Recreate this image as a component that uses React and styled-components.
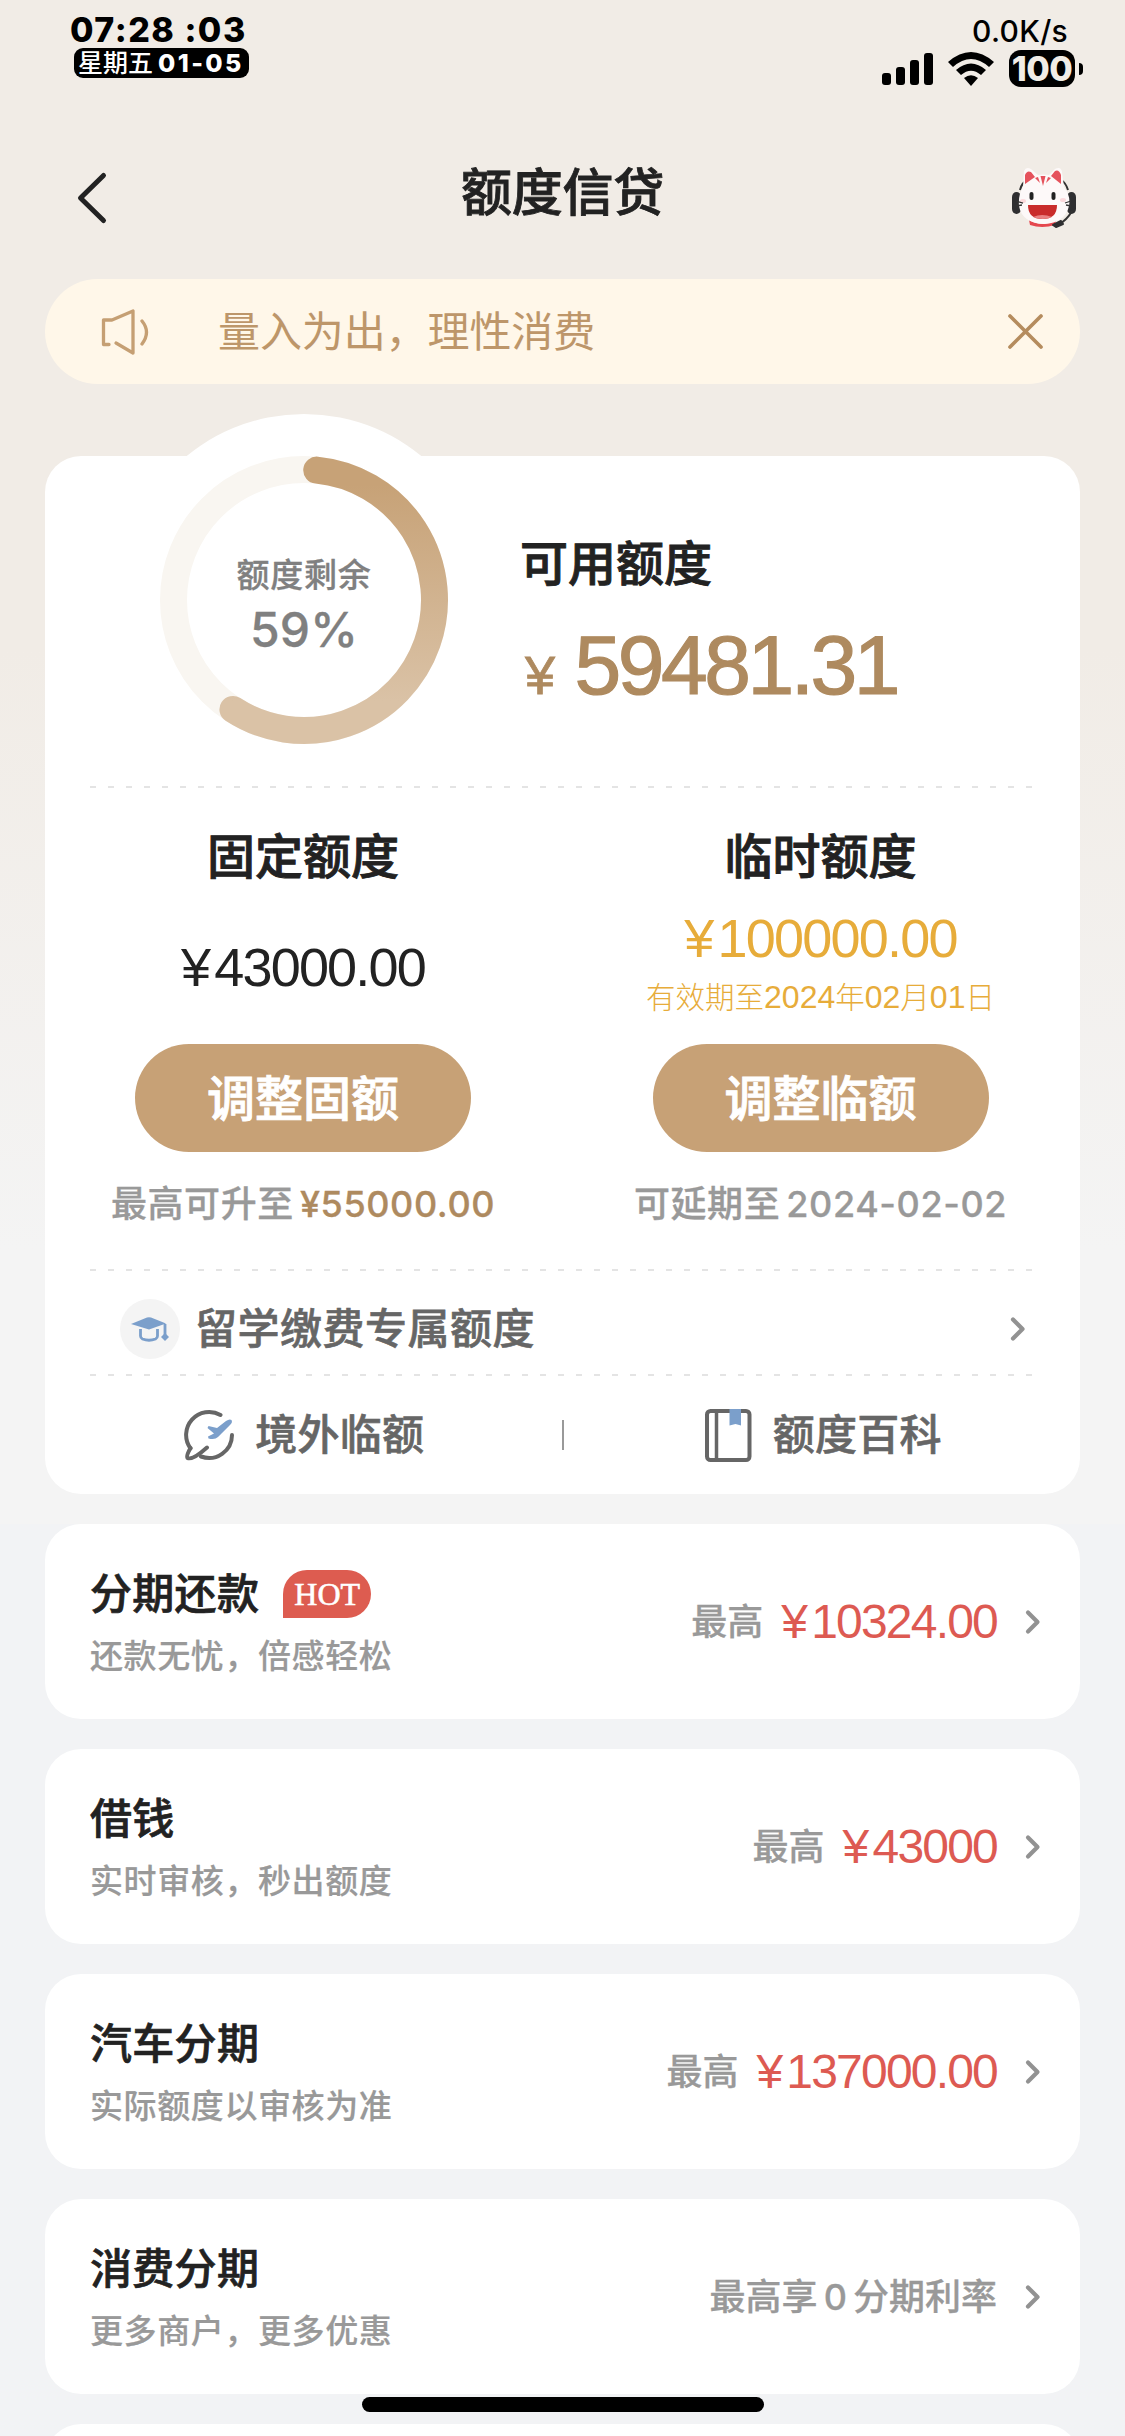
import styled, { createGlobalStyle } from "styled-components"

const GlobalStyle = createGlobalStyle`
    * {
        box-sizing: border-box;
    }
    body {
        margin: 0;
        background: #f2f3f5;
        font-family: Inter, "Noto Sans CJK SC", sans-serif;
        font-weight: 500;
        color: #222;
    }
    svg {
        display: block;
        flex-shrink: 0;
    }
`

const Screen = styled.div`
    position: relative;
    width: 1125px;
    height: 2436px;
    overflow: hidden;
    background: linear-gradient(180deg, #f1ece6 0, #f1ece6 650px, #f4f4f4 1250px, #f4f4f4 1524px, #f2f3f5 1524px);
`

/* ---- status bar ---- */

const StatusBar = styled.header`
    display: flex;
    justify-content: space-between;
    height: 138px;
    padding: 10px 42px 0 70px;
`
const StatusLeft = styled.div`
    display: flex;
    flex-direction: column;
    align-items: flex-start;
`
const Clock = styled.div`
    height: 38px;
    line-height: 39px;
    font-size: 34px;
    font-weight: 800;
    letter-spacing: 1.5px;
    color: #000;
    white-space: pre;
`
const DatePill = styled.div`
    display: flex;
    align-items: center;
    width: 175px;
    height: 30px;
    margin-left: 4px;
    padding-left: 4px;
    border-radius: 9px;
    background: #000;
    color: #fff;
    font-size: 25px;
    line-height: 30px;
    white-space: nowrap;

    b {
        margin-left: 5px;
        font-weight: 800;
        letter-spacing: 2.4px;
    }
`
const StatusRight = styled.div`
    display: flex;
    flex-direction: column;
    align-items: flex-end;
`
const Speed = styled.div`
    height: 40px;
    padding-right: 15px;
    line-height: 42px;
    font-size: 30px;
    letter-spacing: 0.3px;
    color: #000;
`
const StatusIcons = styled.div`
    display: flex;
    align-items: center;
    height: 37px;
`
const Battery = styled.div`
    display: flex;
    align-items: center;
    margin-left: 15px;

    span {
        display: flex;
        align-items: center;
        justify-content: center;
        width: 66px;
        height: 37px;
        border-radius: 12px;
        background: #000;
        color: #f1ece6;
        font-size: 34px;
        font-weight: 800;
        letter-spacing: -0.5px;
    }
    i {
        width: 4px;
        height: 12px;
        margin-left: 4px;
        border-radius: 0 5px 5px 0;
        background: #000;
    }
`

/* ---- title bar and notice ---- */

const NavBar = styled.nav`
    display: grid;
    grid-template-columns: 200px 1fr 200px;
    align-items: center;
    height: 120px;
    padding: 0 48px 0 76px;

    svg:last-child {
        justify-self: end;
    }
`
const Title = styled.h1`
    margin: -10px 0 0 -28px;
    text-align: center;
    font-size: 51px;
    font-weight: 500;
    line-height: 60px;
    letter-spacing: -0.3px;
    -webkit-text-stroke: 0.8px;
`
const Notice = styled.section`
    display: flex;
    align-items: center;
    height: 105px;
    margin: 21px 45px 0;
    padding: 0 36px 0 54px;
    border-radius: 53px;
    background: #fff7e9;
    color: #bd966a;
`
const NoticeText = styled.p`
    flex: 1;
    margin: 0 0 0 67px;
    font-size: 42px;
    font-weight: 400;
    line-height: 60px;
    letter-spacing: -0.1px;
`

/* ---- limit card ---- */

const LimitCard = styled.section`
    height: 1038px;
    margin: 72px 45px 0;
    border-radius: 36px;
    background: #fff;
`
const Summary = styled.div`
    display: flex;
    height: 330px;
    padding-left: 74px;
`
const Dial = styled.div`
    position: relative;
    width: 370px;
    height: 370px;
    margin-top: -42px;
    border-radius: 50%;
    background: #fff;
`
const DialLabel = styled.div`
    position: absolute;
    inset: 0;
    padding-top: 142px;
    text-align: center;
    color: #808080;
    font-size: 33px;
    line-height: 38px;
    letter-spacing: 0.7px;
    -webkit-text-stroke: 0.3px;

    strong {
        display: block;
        margin-top: 5px;
        font-size: 48px;
        font-weight: 500;
        line-height: 62px;
        letter-spacing: 0.2px;
    }
`
const Available = styled.div`
    padding: 78px 0 0 31px;
`
const Heading = styled.h2`
    margin: 0;
    font-size: 48px;
    font-weight: 500;
    line-height: 60px;
    -webkit-text-stroke: 0.9px;
`
const BigAmount = styled.div`
    display: flex;
    align-items: baseline;
    margin: 23px 0 0 5px;
    color: #ae8a5f;
    font: 84px/96px "Liberation Sans", sans-serif;
    letter-spacing: -3.5px;
    -webkit-text-stroke: 1.2px;

    small {
        margin-right: 23px;
        font-size: 54px;
        -webkit-text-stroke-width: 0.8px;
    }
`
const DashedLine = styled.div`
    height: 2px;
    margin: 0 45px;
    background: repeating-linear-gradient(90deg, #e4e4e4 0 6px, transparent 6px 18px);
`
const LimitColumns = styled.div`
    display: grid;
    grid-template-columns: 516px 1fr;
    height: 481px;
`
const LimitColumn = styled.div`
    display: flex;
    flex-direction: column;
    align-items: center;
    padding-top: 39px;
`
const AmountBox = styled.div`
    display: flex;
    flex-direction: column;
    align-items: center;
    justify-content: center;
    height: 137px;
    margin-top: 11px;
    margin-bottom: 9px;
`
const Amount = styled.span`
    color: ${props => props.$color};
    font-family: "Liberation Sans", sans-serif;
    font-size: ${props => props.$size}px;
    font-weight: 400;
    line-height: ${props => props.$size + 4}px;
    letter-spacing: -1.8px;
    white-space: nowrap;

    &::first-letter {
        margin-right: 5px;
    }
`
const ValidUntil = styled.span`
    margin: 10px 0 10px;
    color: #e7ac3a;
    font: 300 29.5px/36px "Noto Sans CJK SC", sans-serif;
    white-space: nowrap;

    i {
        font: 400 32px/36px "Liberation Sans", sans-serif;
    }
`
const PillButton = styled.button`
    width: 336px;
    height: 108px;
    padding: 2px 0 0;
    border: 0;
    border-radius: 54px;
    background: #c7a176;
    color: #fff;
    font: 500 48px/60px Inter, "Noto Sans CJK SC", sans-serif;
    -webkit-text-stroke: 0.9px;
`
const Caption = styled.p`
    display: flex;
    gap: 6px;
    margin: 28px 0 0;
    color: #999;
    font-size: 36px;
    line-height: 48px;
    letter-spacing: 0.6px;
    white-space: nowrap;
    -webkit-text-stroke: 0.3px;

    span {
        color: ${props => props.$accent || "inherit"};
    }
`
const StudyRow = styled.div`
    display: flex;
    align-items: center;
    height: 103px;
    padding: 12px 54px 0 75px;
    color: #666;
    font-size: 42px;
    line-height: 60px;
    letter-spacing: 0.5px;

    span {
        flex: 1;
        margin-left: 15px;
        -webkit-text-stroke: 0.6px;
    }
`
const StudyBadge = styled.div`
    display: flex;
    align-items: center;
    justify-content: center;
    width: 60px;
    height: 60px;
    border-radius: 50%;
    background: #f4f4f4;
`
const Shortcuts = styled.div`
    display: grid;
    grid-template-columns: 1fr 2px 1fr;
    align-items: center;
    height: 117px;
`
const Shortcut = styled.div`
    display: flex;
    align-items: center;
    justify-content: center;
    gap: 21px;
    padding-left: 2px;
    color: #666;
    font-size: 42px;
    line-height: 60px;
    letter-spacing: 0.3px;
    -webkit-text-stroke: 0.6px;
`
const Separator = styled.div`
    height: 30px;
    background: #999;
`

/* ---- product list ---- */

const Product = styled.article`
    display: flex;
    align-items: center;
    height: 195px;
    margin: 30px 45px 0;
    padding: 0 39px 0 45px;
    border-radius: 36px;
    background: #fff;
`
const ProductInfo = styled.div`
    flex: 1;
`
const ProductTitle = styled.h3`
    display: flex;
    align-items: center;
    height: 60px;
    margin: 0;
    padding-bottom: 3px;
    font-size: 42px;
    font-weight: 500;
    line-height: 56px;
    letter-spacing: 0.3px;
    -webkit-text-stroke: 0.7px;
`
const HotBadge = styled.span`
    width: 88px;
    height: 48px;
    margin-left: 24px;
    border-radius: 24px 24px 24px 0;
    background: #dd5c50;
    color: #fff;
    text-align: center;
    font: 32px/48px "Liberation Serif", serif;
    letter-spacing: 0;
    -webkit-text-stroke: 0.6px;
`
const ProductDesc = styled.p`
    margin: 9px 0 0;
    color: #999;
    font-size: 33px;
    line-height: 44px;
    letter-spacing: 0.6px;
    -webkit-text-stroke: 0.2px;
`
const ProductLimit = styled.div`
    display: flex;
    align-items: center;
    gap: 18px;
    margin-right: 28px;
    color: #999;
    font-size: 36px;
    line-height: 48px;
    word-spacing: -3.5px;
    white-space: pre;
`
const LimitText = styled.span`
    -webkit-text-stroke: 0.3px;
`
const HomeIndicator = styled.div`
    position: absolute;
    left: 362px;
    bottom: 24px;
    width: 402px;
    height: 15px;
    border-radius: 8px;
    background: #000;
`

/* ---- icons ---- */

const SignalIcon = () => (
    <svg width="51" height="32" viewBox="0 0 51 32">
        <rect x="0" y="20" width="9" height="12" rx="3" />
        <rect x="14" y="14" width="9" height="18" rx="3" />
        <rect x="28" y="7" width="9" height="25" rx="3" />
        <rect x="42" y="0" width="9" height="32" rx="3" />
    </svg>
)

const WifiSvg = styled.svg`
    margin-left: 15px;
`

const WifiIcon = () => (
    <WifiSvg width="46" height="34" viewBox="0 0 46 34">
        <path d="M0 10Q23 -10 46 10L41 15Q23 -1 5 15Z" />
        <path d="M8 18Q23 5 38 18L33 23Q23 14.500 13 23Z" />
        <path d="M16 26Q23 20.500 30 26L23 34Z" />
    </WifiSvg>
)

const BackIcon = () => (
    <svg width="32" height="54" viewBox="0 0 32 54" fill="none" stroke="#222" strokeWidth="5" strokeLinecap="round" strokeLinejoin="round">
        <path d="M27.500 4.500L4.500 27L27.500 49.500" />
    </svg>
)

const CatIcon = () => (
    <svg width="66" height="62" viewBox="0 0 66 62">
        <path d="M9 23Q11 15 17 13M57 23Q55 16 50 13" fill="none" stroke="#333" strokeWidth="2" />
        <rect x="1" y="25" width="9" height="22" rx="5" fill="#2f2f31" />
        <rect x="56" y="25" width="9" height="22" rx="5" fill="#2f2f31" />
        <path d="M18 53Q31 61 45 53L44 58Q31 62 19 58Z" fill="#e5484f" />
        <path d="M12 20L13 4Q15-1 20 2L27 8Q32 7 38 8L44 2Q50-1 51 5L53 20Q60 29 58 39Q54 56 33 57Q11 56 8 39Q7 28 12 20Z" fill="#fdf9f9" />
        <path d="M14 17V8Q16 3 20 5L24 10ZM50 17V8Q48 2 44 4L40 9Z" fill="#e5525c" />
        <path d="M29.500 9H34.500L32 19ZM24 11L29 16L27 10ZM40 11L35 16L37 10Z" fill="#e5525c" />
        <rect x="18.500" y="25" width="4" height="8" rx="2" fill="#222" />
        <rect x="40.500" y="25" width="4" height="8" rx="2" fill="#222" />
        <ellipse cx="12" cy="34" rx="3" ry="2" fill="#fbd9dc" />
        <ellipse cx="52" cy="33" rx="3" ry="2" fill="#fbd9dc" />
        <path d="M17 38H46Q46 52 31.500 52Q17 52 17 38Z" fill="#c92c2b" />
        <path d="M22 50Q31 46 41 50Q32 54 22 50Z" fill="#e98282" />
        <path d="M5 34L12 36M5 39L11 38M60 34L54 36M60 39L55 38" stroke="#333" strokeWidth="1.300" />
        <path d="M61 44Q56 53 47 58" fill="none" stroke="#333" strokeWidth="2" />
        <path d="M42 58L50 54L52 57L45 60Z" fill="#2f2f31" stroke="#2f2f31" strokeWidth="2" strokeLinejoin="round" />
    </svg>
)

const SpeakerIcon = () => (
    <svg width="52" height="50" viewBox="0 0 52 50" fill="none" stroke="#c59f73" strokeWidth="3.300" strokeLinejoin="round" strokeLinecap="round">
        <path d="M10 37.500H4.500V13H13L34 4V46L17 36" />
        <path d="M43 14Q52 25 43 37" />
    </svg>
)

const CloseIcon = () => (
    <svg width="37" height="37" viewBox="0 0 37 37" stroke="#b58c5e" strokeWidth="3.700" strokeLinecap="round">
        <path d="M3 3L34 34M34 3L3 34" />
    </svg>
)

const ChevronIcon = () => (
    <svg width="16" height="26" viewBox="0 0 16 26" fill="none" stroke="#929292" strokeWidth="4.200" strokeLinecap="round" strokeLinejoin="round">
        <path d="M3 3.500L12.500 13L3 22.500" />
    </svg>
)

const GraduationIcon = () => (
    <svg width="40" height="26" viewBox="0 0 40 26">
        <path d="M1 8L17 1.500Q19 .8 21 1.500L36 7.500L19 13.500Z" fill="#7b9fcb" />
        <path d="M10.500 13V20Q10.500 22 12.500 23Q19 25.500 25.500 23Q27.500 22 27.500 20V13M35 8V19" fill="none" stroke="#7b9fcb" strokeWidth="2.800" />
        <path d="M35 17L39 21L35 25L31 21Z" fill="#7b9fcb" />
    </svg>
)

const PlaneIcon = () => (
    <svg width="50" height="54" viewBox="0 0 50 54" fill="none" strokeLinecap="round">
        <path d="M36.500 7A23 23 0 0 0 6.500 40.500M48 27A23 23 0 0 1 17 48.500" stroke="#666" strokeWidth="4" />
        <path d="M6.500 40Q2 48 3.500 50Q8.500 52.500 23 39.500" stroke="#666" strokeWidth="4" />
        <path d="M24.500 18L33 20L42 13Q45.500 10.500 47.500 12Q49 14.500 45.500 17.500L34 29Q31 32 24.500 30.500L24 28.500L30 25.500L23.500 20Z" fill="#7b9fcb" />
    </svg>
)

const BookIcon = () => (
    <svg width="48" height="54" viewBox="0 0 48 54" fill="none" stroke="#666" strokeWidth="4">
        <rect x="3" y="3" width="42.500" height="49" rx="3.500" />
        <path d="M12.500 3V51" strokeWidth="3.500" />
        <path d="M25.500 1H37V17.500L31.500 16L25.500 17.500Z" fill="#7b9fcb" stroke="none" />
    </svg>
)

// Arc runs clockwise from just past 12 o'clock, angles in degrees from the top
const point = (deg) => {
    const rad = (deg * Math.PI) / 180
    return `${185 + 130.5 * Math.sin(rad)} ${186 - 130.5 * Math.cos(rad)}`
}

const Ring = () => (
    <svg width="370" height="370" viewBox="0 0 370 370" fill="none" strokeWidth="27">
        <defs>
            <linearGradient id="ring" x1="0" y1="42" x2="0" y2="330" gradientUnits="userSpaceOnUse">
                <stop offset="0.1" stopColor="#c7a277" />
                <stop offset="0.85" stopColor="#dac2a6" />
            </linearGradient>
        </defs>
        <circle cx="185" cy="186" r="130.500" stroke="#f9f6f1" />
        <path d={`M${point(5.6)}A130.500 130.500 0 1 1 ${point(213)}`} stroke="url(#ring)" strokeLinecap="round" />
    </svg>
)

const products = [
    { id: 1, title: "分期还款", desc: "还款无忧，倍感轻松", hot: true, amount: "¥10324.00" },
    { id: 2, title: "借钱", desc: "实时审核，秒出额度", amount: "¥43000" },
    { id: 3, title: "汽车分期", desc: "实际额度以审核为准", amount: "¥137000.00" },
    { id: 4, title: "消费分期", desc: "更多商户，更多优惠", text: "最高享 0 分期利率" },
]

function App() {
    return (
        <Screen>
            <GlobalStyle />
            <StatusBar>
                <StatusLeft>
                    <Clock>07:28 :03</Clock>
                    <DatePill>星期五<b>01-05</b></DatePill>
                </StatusLeft>
                <StatusRight>
                    <Speed>0.0K/s</Speed>
                    <StatusIcons>
                        <SignalIcon />
                        <WifiIcon />
                        <Battery><span>100</span><i /></Battery>
                    </StatusIcons>
                </StatusRight>
            </StatusBar>

            <NavBar>
                <BackIcon />
                <Title>额度信贷</Title>
                <CatIcon />
            </NavBar>

            <Notice>
                <SpeakerIcon />
                <NoticeText>量入为出，理性消费</NoticeText>
                <CloseIcon />
            </Notice>

            <LimitCard>
                <Summary>
                    <Dial>
                        <Ring />
                        <DialLabel>额度剩余<strong>59%</strong></DialLabel>
                    </Dial>
                    <Available>
                        <Heading>可用额度</Heading>
                        <BigAmount><small>¥</small>59481.31</BigAmount>
                    </Available>
                </Summary>
                <DashedLine />
                <LimitColumns>
                    <LimitColumn>
                        <Heading>固定额度</Heading>
                        <AmountBox>
                            <Amount $size={54} $color="#222">¥43000.00</Amount>
                        </AmountBox>
                        <PillButton>调整固额</PillButton>
                        <Caption $accent="#ae8a5f">最高可升至<span>¥55000.00</span></Caption>
                    </LimitColumn>
                    <LimitColumn>
                        <Heading>临时额度</Heading>
                        <AmountBox>
                            <Amount $size={54} $color="#e7ac3a">¥100000.00</Amount>
                            <ValidUntil>有效期至<i>2024</i>年<i>02</i>月<i>01</i>日</ValidUntil>
                        </AmountBox>
                        <PillButton>调整临额</PillButton>
                        <Caption>可延期至<span>2024-02-02</span></Caption>
                    </LimitColumn>
                </LimitColumns>
                <DashedLine />
                <StudyRow>
                    <StudyBadge><GraduationIcon /></StudyBadge>
                    <span>留学缴费专属额度</span>
                    <ChevronIcon />
                </StudyRow>
                <DashedLine />
                <Shortcuts>
                    <Shortcut><PlaneIcon />境外临额</Shortcut>
                    <Separator />
                    <Shortcut><BookIcon />额度百科</Shortcut>
                </Shortcuts>
            </LimitCard>

            {products.map((item) => (
                <Product key={item.id}>
                    <ProductInfo>
                        <ProductTitle>
                            {item.title}
                            {item.hot && <HotBadge>HOT</HotBadge>}
                        </ProductTitle>
                        <ProductDesc>{item.desc}</ProductDesc>
                    </ProductInfo>
                    <ProductLimit>
                        <LimitText>{item.text || "最高"}</LimitText>
                        {item.amount && <Amount $size={48} $color="#dd5a52">{item.amount}</Amount>}
                    </ProductLimit>
                    <ChevronIcon />
                </Product>
            ))}
            {/* next entry, cut off by the bottom edge */}
            <Product />
            <HomeIndicator />
        </Screen>
    )
}

export default App
